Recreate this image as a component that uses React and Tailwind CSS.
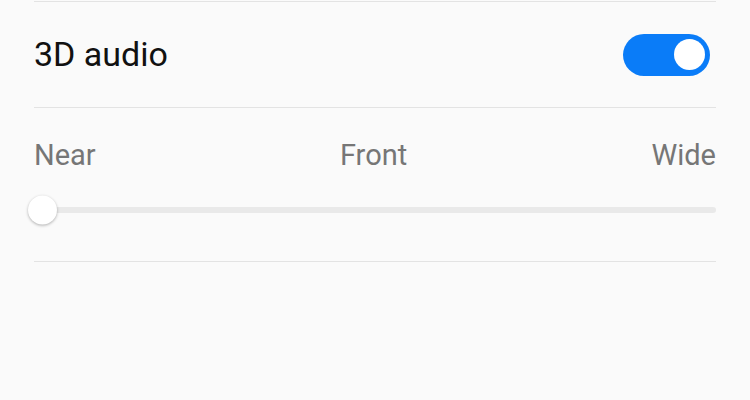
import React, { useState } from "react";

export default function App() {
  const [enabled, setEnabled] = useState(true);

  return (
    <div
      className="w-[750px] h-[400px] bg-[#fafafa] px-[34px] pt-px overflow-hidden"
      style={{ fontFamily: "Roboto, 'Noto Sans', sans-serif" }}
    >
      {/* 3D audio row */}
      <div className="border-t border-[#e3e3e3] h-[106px] flex items-center justify-between">
        <span className="text-[34px] text-[#111] leading-none -mt-[2px]">3D audio</span>
        <button
          onClick={() => setEnabled(!enabled)}
          className="w-[87px] h-[42px] rounded-full bg-[#0a7cf8] flex items-center justify-end px-[5px] mr-[6px]"
        >
          <span className="w-[31px] h-[31px] rounded-full bg-white" />
        </button>
      </div>

      {/* Slider section */}
      <div className="border-t border-[#e3e3e3] h-[155px] border-b flex flex-col">
        <div className="flex justify-between items-center pt-[33px] text-[29px] leading-none text-[#767676]">
          <span>Near</span>
          <span>Front</span>
          <span>Wide</span>
        </div>
        <div className="relative mt-[37px] h-[6px] rounded-full bg-[#e9e9e9] ml-[-6px]">
          <div className="absolute left-0 top-1/2 -translate-y-1/2 w-[29px] h-[29px] rounded-full bg-white shadow-[0_1px_3px_rgba(0,0,0,0.3)]" />
        </div>
      </div>
    </div>
  );
}
